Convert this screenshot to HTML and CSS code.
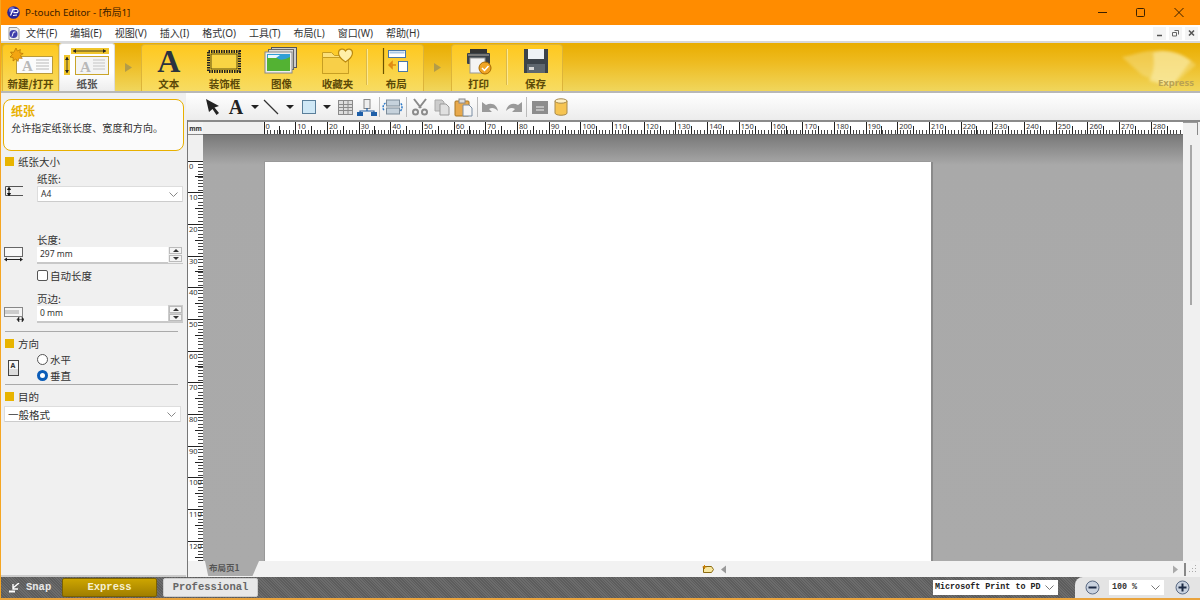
FILE: index.html
```html
<!DOCTYPE html>
<html lang="zh">
<head>
<meta charset="utf-8">
<title>P-touch Editor</title>
<link rel="stylesheet" href="styles.css">
</head>
<body>
<div class="window">
  <header class="titlebar">
    <svg class="appicon" width="13" height="13" viewBox="0 0 13 13"><circle cx="6.5" cy="6.5" r="6.3" fill="#26269a"/><circle cx="5" cy="4" r="3" fill="#6f6fd0"/><path d="M3.5 9.5 6 3.5h3.5a1.2 1.2 0 0 1 0 3.2H6.5M6 9.5l4-.5" stroke="#fff" stroke-width="1.2" fill="none"/></svg>
    <span class="title">P-touch Editor - [布局1]</span>
    <div class="wincontrols">
      <svg width="38" height="25" viewBox="0 0 38 25"><path d="M14 12.5h9" stroke="#3a2000" stroke-width="1"/></svg>
      <svg width="38" height="25" viewBox="0 0 38 25"><rect x="14.5" y="8.5" width="8" height="8" rx="1" fill="none" stroke="#3a2000" stroke-width="1"/></svg>
      <svg width="38" height="25" viewBox="0 0 38 25"><path d="M14.5 8l9 9M23.5 8l-9 9" stroke="#3a2000" stroke-width="1"/></svg>
    </div>
  </header>

  <nav class="menubar">
    <svg class="docicon" width="12" height="13" viewBox="0 0 12 13"><path d="M1 .5h8l2 2v10H1z" fill="#eee" stroke="#999"/><circle cx="5.5" cy="7" r="4" fill="#3d3dab"/><path d="M4 9.5 5.5 5h2" stroke="#fff" fill="none"/></svg>
    <span>文件(F)</span><span>编辑(E)</span><span>视图(V)</span><span>插入(I)</span><span>格式(O)</span><span>工具(T)</span><span>布局(L)</span><span>窗口(W)</span><span>帮助(H)</span>
    <div class="mdi">
      <button class="mdibtn"><svg width="13" height="12" viewBox="0 0 13 12"><path d="M4 8.5h5" stroke="#555" stroke-width="1.5"/></svg></button>
      <button class="mdibtn"><svg width="13" height="12" viewBox="0 0 13 12"><path d="M5.5 3.5h4v4M3.5 5.5h4v3.5h-4z" stroke="#666" fill="none"/></svg></button>
      <button class="mdibtn"><svg width="13" height="12" viewBox="0 0 13 12"><path d="M4 3.5l5 5M9 3.5l-5 5" stroke="#555" stroke-width="1.6"/></svg></button>
    </div>
  </nav>

  <section class="ribbon">
    <div class="rgroup rg-new">
      <div class="ritem wfull">
        <svg width="46" height="30" viewBox="0 0 46 30"><rect x="8.5" y="10.5" width="36" height="17" fill="#fbfbfb" stroke="#b99a3a"/><path d="M28 14h13M28 17h13M28 20h13M28 23h13" stroke="#cfcfcf" stroke-width="1.5"/><text x="14" y="25" class="ico-a">A</text><path d="M8 2l1.400 3 3-1.500-.5 3.300 3.300.8-2.700 2 1.800 2.800-3.400-.2-.9 3.300-2.300-2.500L5 15l.2-3.400L2 11l2.300-2.300L2.500 6l3.300.3z" fill="#f3a511" stroke="#a86a00" stroke-width=".6"/></svg>
        <span class="rlabel">新建/打开</span>
      </div>
    </div>
    <div class="rtab">
      <svg width="46" height="30" viewBox="0 0 46 30"><rect x="11.500" y="10.500" width="33" height="18" fill="#f4f4f4" stroke="#c9a429"/><path d="M29 14h12M29 17h12M29 20h12M29 23h12" stroke="#d4d4d4" stroke-width="1.5"/><text x="16" y="26" class="ico-a">A</text><rect x="7" y="2" width="38" height="6" fill="#f0c52c"/><path d="M9 5h33" stroke="#222" stroke-width=".8"/><path d="M9 5l3-2v4zM42 5l-3-2v4z" fill="#222"/><rect x="0" y="9" width="6" height="20" fill="#f0c52c"/><path d="M3 11v16" stroke="#222" stroke-width=".8"/><path d="M3 11l-2 3h4zM3 27l-2-3h4z" fill="#222"/></svg>
      <span class="rlabel">纸张</span>
    </div>
    <div class="rarrow"><svg width="8" height="9" viewBox="0 0 8 9"><path d="M1 0l7 4.500-7 4.500z" fill="#b39c48"/></svg></div>
    <div class="rgroup rg-main">
      <div class="ritem w54">
        <span class="bigA">A</span>
        <span class="rlabel">文本</span>
      </div>
      <div class="ritem w58">
        <svg width="36" height="30" viewBox="0 0 36 30"><rect x="2.500" y="5.500" width="31" height="20" fill="#f7cf3a" stroke="#222" stroke-width="3" stroke-dasharray="1.500 1"/><rect x="5" y="8" width="26" height="15" fill="#f9d544" stroke="#3a3000" stroke-width=".8"/></svg>
        <span class="rlabel">装饰框</span>
      </div>
      <div class="ritem w57">
        <svg width="34" height="30" viewBox="0 0 34 30"><rect x="7.500" y="1.500" width="25" height="20" fill="#ccc" stroke="#555"/><rect x="4.500" y="3.500" width="25" height="20" fill="#ddd" stroke="#666"/><rect x="1" y="6" width="27" height="21" fill="#eee" stroke="#888"/><rect x="3" y="8" width="23" height="17" fill="#2f9fd6"/><path d="M3 12q6-4 10 0t13-1v14H3z" fill="#53b233"/><path d="M4 9h12l-4 3H4z" fill="#e8f6ff"/></svg>
        <span class="rlabel">图像</span>
      </div>
      <div class="ritem w56">
        <svg width="34" height="30" viewBox="0 0 34 30"><path d="M1.500 6.500h9l3 3h14v18h-26z" fill="#fbe07a" stroke="#c79e22"/><path d="M1.500 11.500h26v16h-26z" fill="#f8cf48" stroke="#c79e22"/><path d="M24.500 16s-7-4.500-7-9c0-4.500 5.500-5 7-2 1.500-3 7-2.500 7 2 0 4.500-7 9-7 9z" fill="#fff0a8" stroke="#bb8a10" stroke-width="1.200"/></svg>
        <span class="rlabel">收藏夹</span>
      </div>
      <i class="rsep"></i>
      <div class="ritem w54">
        <svg width="28" height="30" viewBox="0 0 28 30"><path d="M1.500 2v26" stroke="#6a5200" stroke-width="1.200"/><rect x="6.500" y="4.500" width="17" height="7" fill="#fff" stroke="#4a78a8"/><rect x="7.500" y="5.500" width="15" height="2" fill="#a9c8e6"/><rect x="16.500" y="15.500" width="9" height="10" fill="#fff" stroke="#4a78a8"/><path d="M14 19H7M7 19l3-3v6z" stroke="#e08a10" stroke-width="1.500" fill="#fff2b0"/></svg>
        <span class="rlabel">布局</span>
      </div>
    </div>
    <div class="rarrow"><svg width="8" height="9" viewBox="0 0 8 9"><path d="M1 0l7 4.500-7 4.500z" fill="#b39c48"/></svg></div>
    <div class="rgroup rg-out">
      <div class="ritem w54">
        <svg width="28" height="30" viewBox="0 0 28 30"><path d="M5 3h17v5H5z" fill="#333"/><rect x="2" y="7" width="23" height="11" rx="1" fill="#3c4248"/><rect x="5" y="12" width="15" height="15" fill="#f4f4f4" stroke="#999"/><rect x="3" y="8" width="21" height="2" fill="#777"/><circle cx="20" cy="22" r="6" fill="#f0a526" stroke="#a86a00"/><path d="M17 22l2.500 2.500 4-4.500" stroke="#fff" stroke-width="1.500" fill="none"/></svg>
        <span class="rlabel">打印</span>
      </div>
      <i class="rsep"></i>
      <div class="ritem w54">
        <svg width="28" height="30" viewBox="0 0 28 30"><path d="M2 3h24v24H2z" fill="#3c434a"/><rect x="6" y="3" width="16" height="10" fill="#eef2f5"/><rect x="5" y="18" width="18" height="9" fill="#5e666e"/><rect x="7" y="21" width="5" height="3" fill="#d8d8d8"/></svg>
        <span class="rlabel">保存</span>
      </div>
    </div>
    <div class="watermark">
      <svg class="wm-shape" width="100" height="50" viewBox="0 0 100 50"><path d="M22 14c14-2 24-8 44-6 14 2 24 8 30 14L70 44 42 32z" fill="#f8e8a0" opacity=".4"/><path d="M53 10c2 12 0 22-4 28l22 6 20-26c-10-8-24-13-38-8z" fill="#fbeeb0" opacity=".55"/></svg>
      <span class="wm-text">Express</span>
    </div>
  </section>

  <main class="work">
    <aside class="panel">
      <div class="callout">
        <h2 class="callout-title">纸张</h2>
        <p class="callout-text">允许指定纸张长度、宽度和方向。</p>
      </div>
      <h3 class="sect s1"><i class="sq"></i>纸张大小</h3>
      <div class="field f-paper">
        <svg class="ficon" width="20" height="12" viewBox="0 0 20 12"><path d="M19 .5H1.500v9H19" fill="none" stroke="#555"/><path d="M5 1.500v8M3.500 3.500 5 1.500l1.500 2zM3.500 7.500 5 9.500l1.500-2z" stroke="#111" fill="#111"/></svg>
        <div class="fbody">
          <label class="flabel">纸张:</label>
          <div class="select"><span class="val-latin">A4</span><svg width="9" height="5" viewBox="0 0 9 5"><path d="M.5.500l4 4 4-4" stroke="#888" fill="none"/></svg></div>
        </div>
      </div>
      <div class="field f-len">
        <svg class="ficon" width="20" height="16" viewBox="0 0 20 16"><rect x=".5" y=".5" width="18" height="9" fill="#f8f8f8" stroke="#666"/><path d="M1 12.500h17" stroke="#222"/><path d="M0 12.500l3-2v4zM19 12.500l-3-2v4z" fill="#222"/></svg>
        <div class="fbody">
          <label class="flabel">长度:</label>
          <div class="spin"><span class="val-latin">297 mm</span><div class="spinbtns"><b class="up"></b><b class="down"></b></div></div>
        </div>
      </div>
      <label class="check"><i class="box"></i>自动长度</label>
      <div class="field f-margin">
        <svg class="ficon" width="20" height="16" viewBox="0 0 20 16"><rect x=".5" y=".5" width="18" height="9" fill="#f4f4f4" stroke="#888"/><path d="M1 3h14v4H1z" fill="#ccc"/><path d="M15 12.500h3M15 10v5l-2-2.500zM18 10v5l2-2.500z" fill="#222" stroke="#222" stroke-width=".5"/></svg>
        <div class="fbody">
          <label class="flabel">页边:</label>
          <div class="spin"><span class="val-latin">0 mm</span><div class="spinbtns framed"><b class="up"></b><b class="down"></b></div></div>
        </div>
      </div>
      <hr class="rule r1">
      <h3 class="sect"><i class="sq"></i>方向</h3>
      <div class="orient">
        <svg width="12" height="16" viewBox="0 0 12 16"><rect x=".5" y=".5" width="10" height="15" fill="#f6f6f6" stroke="#444"/><rect x="1" y="9" width="9" height="6" fill="#ddd"/><text x="2.500" y="8" class="ico-tiny">A</text></svg>
        <div class="radios">
          <label class="radio"><i class="dot"></i>水平</label>
          <label class="radio"><i class="dot on"></i>垂直</label>
        </div>
      </div>
      <hr class="rule r2">
      <h3 class="sect"><i class="sq"></i>目的</h3>
      <div class="select wide"><span>一般格式</span><svg width="9" height="5" viewBox="0 0 9 5"><path d="M.5.500l4 4 4-4" stroke="#888" fill="none"/></svg></div>
    </aside>

    <div class="docarea">
      <div class="toolbar">
        <svg width="22" height="20" viewBox="0 0 22 20"><path d="M4 2l13 7-4.500 1.500L17 16l-2.500 2-4-6L7 15z" fill="#222"/></svg>
        <svg width="24" height="20" viewBox="0 0 24 20"><text x="12" y="17" class="ico-toolA">A</text></svg>
        <svg width="14" height="20" viewBox="0 0 14 20"><path d="M3 8h8l-4 4z" fill="#222"/></svg>
        <svg width="18" height="20" viewBox="0 0 18 20"><path d="M2 3l14 14" stroke="#333" stroke-width="1.300"/></svg>
        <svg width="20" height="20" viewBox="0 0 20 20"><path d="M6 8h8l-4 4z" fill="#222"/></svg>
        <svg width="18" height="20" viewBox="0 0 18 20"><rect x="2.500" y="3.500" width="13" height="13" fill="#cfe8f6" stroke="#5a7f9a"/></svg>
        <svg width="18" height="20" viewBox="0 0 18 20"><path d="M5 8h8l-4 4z" fill="#222"/></svg>
        <svg width="18" height="20" viewBox="0 0 18 20"><rect x="2.500" y="3.500" width="14" height="14" fill="#ddd" stroke="#8a8a8a"/><path d="M2.500 7.500h14M2.500 10.500h14M2.500 13.500h14M7.500 3.500v14M12 3.500v14" stroke="#8a8a8a"/></svg>
        <svg width="24" height="20" viewBox="0 0 24 20"><rect x="10" y="2.500" width="6" height="9" fill="#eee" stroke="#888"/><path d="M13 11v3M6 17v-3h14v3" stroke="#1e5fa8" fill="none" stroke-width="1.200"/><rect x="3" y="15" width="6" height="4" fill="#1e5fa8"/><rect x="17" y="15" width="6" height="4" fill="#1e5fa8"/></svg>
        <i class="tsep"></i>
        <svg width="25" height="20" viewBox="-1.500 0 25 20"><rect x="5" y="3" width="13" height="6" fill="#c6d2dc" stroke="#7d8c99"/><rect x="5" y="11" width="13" height="6" fill="#c6d2dc" stroke="#7d8c99"/><path d="M4 6C1 8 1 12 3 14M19 14c2-2 2-6 0-8" stroke="#2a78c8" stroke-width="1.500" fill="none" stroke-dasharray="2 1"/></svg>
        <i class="tsep"></i>
        <svg width="26" height="20" viewBox="0 0 26 20"><path d="M7 2l7 9M19 2l-7 9" stroke="#8a8a8a" stroke-width="2"/><circle cx="8.500" cy="15" r="2.500" fill="none" stroke="#8a8a8a" stroke-width="2"/><circle cx="17.500" cy="15" r="2.500" fill="none" stroke="#8a8a8a" stroke-width="2"/></svg>
        <svg width="18" height="20" viewBox="0 0 18 20"><path d="M2 3h7l2 2v9H2z" fill="#ccc" stroke="#aaa"/><path d="M7 7h6l3 3v8H7z" fill="#e0e0e0" stroke="#999"/></svg>
        <svg width="25" height="20" viewBox="0 0 25 20"><rect x="4" y="4" width="14" height="15" rx="1" fill="#e8a94c" stroke="#a87622"/><rect x="8" y="2" width="6" height="4" fill="#ddd" stroke="#888"/><path d="M12 8h6l3 3v8h-9z" fill="#f4f4f4" stroke="#7a8ea5"/></svg>
        <i class="tsep"></i>
        <svg width="24" height="20" viewBox="0 0 24 20"><path d="M4 5v10h10l-3-3c3-2 6-1 9 2-1-6-6-9-12-6z" fill="#9a9a9a"/></svg>
        <svg width="23" height="20" viewBox="0 0 23 20"><path d="M20 5v10H10l3-3c-3-2-6-1-9 2 1-6 6-9 12-6z" fill="#9a9a9a"/></svg>
        <i class="tsep"></i>
        <svg width="26" height="20" viewBox="0 0 26 20"><rect x="5" y="4" width="16" height="13" fill="#8d8d8d"/><path d="M9 10h8M9 13h8" stroke="#eee"/></svg>
        <svg width="16" height="20" viewBox="0 0 16 20"><path d="M2 4v12c0 3 12 3 12 0V4z" fill="#f6c452" stroke="#a88a4a"/><ellipse cx="8" cy="4" rx="6" ry="2.200" fill="#fdf0c8" stroke="#a88a4a"/></svg>
      </div>

      <div class="doc">
        <div class="hrow">
          <div class="corner">mm</div>
          <div class="hruler">
            <span>0</span><span>10</span><span>20</span><span>30</span><span>40</span><span>50</span><span>60</span><span>70</span><span>80</span><span>90</span><span>100</span><span>110</span><span>120</span><span>130</span><span>140</span><span>150</span><span>160</span><span>170</span><span>180</span><span>190</span><span>200</span><span>210</span><span>220</span><span>230</span><span>240</span><span>250</span><span>260</span><span>270</span><span>280</span>
          </div>
          <div class="corner-r"></div>
        </div>
        <div class="mid">
          <div class="vruler">
            <span>0</span><span>10</span><span>20</span><span>30</span><span>40</span><span>50</span><span>60</span><span>70</span><span>80</span><span>90</span><span>100</span><span>110</span><span>120</span><span></span>
          </div>
          <div class="canvas"><div class="page"></div></div>
          <div class="vscroll"><i class="thumb"></i></div>
        </div>
        <div class="tabrow">
          <div class="sheet">布局页1</div>
          <svg class="tagicon" width="12" height="9" viewBox="0 0 12 9"><path d="M1.500 1.500h8l2 3-2 3h-8z" fill="#f7e7a0" stroke="#8a6a10"/><path d="M2.500 0v4M.5 2h4" stroke="#d08000"/></svg>
          <svg class="tabl" width="7" height="9" viewBox="0 0 7 9"><path d="M6 .5 1 4.500l5 4z" fill="#999"/></svg>
          <svg class="tabr" width="7" height="9" viewBox="0 0 7 9"><path d="M1 .5l5 4-5 4z" fill="#aaa"/></svg>
          <i class="tabend"></i>
          <svg class="grip" width="10" height="8" viewBox="0 0 10 8"><path d="M8 0h1v1H8zM5 3h1v1H5zM8 3h1v1H8zM2 6h1v1H2zM5 6h1v1H5zM8 6h1v1H8z" fill="#aaa"/></svg>
        </div>
      </div>
    </div>
  </main>

  <footer class="statusbar">
    <div class="snap">
      <svg width="11" height="10" viewBox="0 0 11 10"><path d="M10 0 4 5M4 1v5h5" stroke="#fff" stroke-width="1.400" fill="none"/><path d="M0 8.500h6" stroke="#fff" stroke-width="2"/></svg>
      <span>Snap</span>
    </div>
    <button class="mode active">Express</button>
    <button class="mode">Professional</button>
    <div class="printer"><span>Microsoft Print to PD</span><svg width="9" height="5" viewBox="0 0 9 5"><path d="M.5.500l4 4 4-4" stroke="#777" fill="none"/></svg></div>
    <div class="zoombox">
      <svg width="15" height="15" viewBox="0 0 15 15"><circle cx="7.500" cy="7.500" r="6.500" fill="#c9d2df" stroke="#5b6b84"/><path d="M3.500 7.500h8" stroke="#1c2a44" stroke-width="2"/></svg>
      <div class="zoomsel"><span>100 %</span><svg width="9" height="5" viewBox="0 0 9 5"><path d="M.5.500l4 4 4-4" stroke="#777" fill="none"/></svg></div>
      <svg width="15" height="15" viewBox="0 0 15 15"><circle cx="7.500" cy="7.500" r="6.500" fill="#c9d2df" stroke="#5b6b84"/><path d="M3.500 7.500h8M7.500 3.500v8" stroke="#1c2a44" stroke-width="2"/></svg>
    </div>
  </footer>
</div>
</body>
</html>
```
FILE: styles.css
```css
* { box-sizing: border-box; }
html, body { margin: 0; height: 100%; overflow: hidden; }
body { font-family: "Noto Sans CJK SC", "Noto Sans", sans-serif; color: #222; background: #f0f0f0; }
svg { display: block; flex: none; }
button { font: inherit; padding: 0; }
h2, h3, p { margin: 0; font-weight: 400; }
i { display: block; font-style: normal; }

.window { width: 1200px; height: 600px; display: flex; flex-direction: column; border-left: 1px solid #f5a623; border-bottom: 2px solid #e9a33c; overflow: hidden; }

/* title bar */
.titlebar { height: 25px; flex: none; display: flex; align-items: center; background: #ff8c00; padding-left: 7px; margin-left: -1px; }
.appicon { margin-right: 5px; }
.title { font: 9.800px/1 "Noto Sans", "Noto Sans CJK SC", sans-serif; color: #3a2000; }
.wincontrols { margin-left: auto; display: flex; padding-right: 2px; }

/* menu */
.menubar { height: 16px; flex: none; display: flex; align-items: center; gap: 13px; background: #fff; padding-left: 7px; font: 10px/16px "Noto Sans", "Noto Sans CJK SC", sans-serif; color: #333; }
.docicon { margin-right: -7px; }
.mdi { margin-left: auto; display: flex; gap: 3px; padding-right: 2px; }
.mdibtn { width: 13px; height: 13px; border: 0; background: #f4f4f4; }

/* ribbon */
.ribbon { height: 52px; flex: none; position: relative; display: flex; align-items: flex-end; padding: 0 0 0 1px; background: linear-gradient(#e9ad00 0, #eebb20 40%, #f0d65c 100%); border-top: 2px solid #d8d8d8; border-bottom: 2px solid #b8b8b8; }
.rgroup { height: 47px; display: flex; background: linear-gradient(#ffc81e, #f7dc62); border: 1px solid #dcb43a; border-bottom: 0; border-radius: 4px 4px 0 0; }
.rg-new { width: 57px; }
.rg-main { width: 283px; }
.rg-out { width: 112px; margin-left: 1px; }
.ritem { display: flex; flex-direction: column; align-items: center; justify-content: space-between; padding-top: 1px; }
.wfull { width: 100%; }
.w54 { width: 54px; }
.w56 { width: 56px; }
.w57 { width: 57px; }
.w58 { width: 58px; }
.rtab { width: 56px; height: 48px; display: flex; flex-direction: column; align-items: center; justify-content: space-between; padding-top: 2px; background: linear-gradient(#fff 60%, #ededed); border: 1px solid #ddd; border-bottom: 0; border-radius: 3px 3px 0 0; }
.rlabel { font: 700 10.500px/14px "Noto Sans CJK SC", sans-serif; color: #5c4a08; white-space: nowrap; }
.rtab .rlabel { color: #555; }
.rarrow { width: 26px; height: 46px; flex: none; display: flex; align-items: center; justify-content: center; padding-bottom: 2px; }
.rsep { width: 2px; height: 36px; margin: 4px 1px 0; background: #d9b94c; flex: none; border-right: 1px solid #fde88e; }
.ico-a { font: 700 15px "Liberation Serif", serif; fill: #b8b8b8; }
.bigA { height: 30px; font: 700 32px/30px "Liberation Serif", serif; color: #2b3340; }
.ico-tiny { font: 700 7px "Noto Sans", sans-serif; fill: #333; }
.ico-toolA { font: 700 20px "Liberation Serif", serif; fill: #222; text-anchor: middle; }
.watermark { position: absolute; right: 0; top: 0; width: 100px; height: 48px; }
.wm-shape { filter: blur(1.500px); }
.wm-text { position: absolute; right: 6px; bottom: 1px; font: 700 9.500px/14px "Noto Sans", sans-serif; color: #b9a253; }

/* main */
.work { flex: 1; min-height: 0; display: flex; }
.panel { width: 185px; flex: none; padding: 6px 2px 0 2px; border-bottom: 2px solid #ccc; background: #f0f0f0; font-size: 10.500px; color: #333; }
.callout { height: 52px; padding: 3px 7px; background: #fbfbfb; border: 1px solid #e8b000; border-radius: 8px; }
.callout-title { font: 700 12px/16px "Noto Sans CJK SC", sans-serif; color: #e8b000; }
.callout-text { font-size: 10px; line-height: 18px; letter-spacing: .15px; white-space: nowrap; color: #333; }
.sect { display: flex; align-items: center; gap: 4px; height: 16px; padding-bottom: 2px; margin-left: 2px; font-size: 10.500px; color: #333; }
.s1 { margin-top: 3px; }
.sq { width: 9px; height: 9px; background: #e8b400; }
.field { display: flex; }
.ficon { margin: 15px 13px 0 1px; }
.fbody { width: 146px; }
.f-paper { margin-top: 1px; height: 61px; }
.f-margin { margin-top: 8px; }
.f-margin .ficon { margin-top: 16px; }
.flabel { display: block; font-size: 10.500px; line-height: 15px; color: #333; }
.select { height: 16px; display: flex; align-items: center; justify-content: space-between; padding: 0 4px 0 3px; background: #fff; border: 1px solid #ddd; border-bottom-color: #ccc; border-radius: 1px; }
.val-latin { font: 8.500px/1 "Noto Sans", sans-serif; color: #333; }
.spin { height: 17px; display: flex; align-items: center; justify-content: space-between; padding-left: 3px; background: #fff; border-bottom: 2px solid #c8c8c8; }
.spinbtns { width: 15px; height: 17px; display: flex; flex-direction: column; gap: 1px; padding: 1px 1px; background: #f0f0f0; }
.spinbtns.framed { background: #ccc; }
.spinbtns b { flex: 1; display: flex; align-items: center; justify-content: center; background: #f4f4f4; border: 1px solid #bbb; }
.spinbtns b::before { content: ""; border: 3px solid transparent; }
.spinbtns .up::before { border-bottom-color: #333; border-top-width: 0; }
.spinbtns .down::before { border-top-color: #333; border-bottom-width: 0; }
.check { display: flex; align-items: center; gap: 2px; height: 14px; padding-bottom: 2px; margin: 5px 0 0 34px; }
.box { width: 11px; height: 11px; background: #fff; border: 1px solid #555; border-radius: 2px; }
.rule { margin: 0 6px 0 2px; border: 0; border-top: 1px solid #aaa; }
.r1 { margin-top: 8px; margin-bottom: 4px; }
.r2 { margin-top: 0; margin-bottom: 4px; }
.orient { display: flex; }
.orient svg { margin: 8px 17px 0 5px; }
.radios { display: flex; flex-direction: column; }
.radio { display: flex; align-items: center; gap: 2px; height: 16px; padding-bottom: 2px; }
.dot { width: 11px; height: 11px; border-radius: 50%; background: #fff; border: 1px solid #555; }
.dot.on { border: 3px solid #0a5cb8; }
.wide { width: 177px; margin: 1px 0 0 1px; font-size: 10.500px; color: #333; }

/* document area */
.docarea { flex: 1; min-width: 0; display: flex; flex-direction: column; }
.toolbar { height: 27px; flex: none; display: flex; align-items: center; padding-left: 16px; background: linear-gradient(#fff, #ececec); }
.tsep { width: 1px; height: 20px; margin: 0 .5px; background: #bbb; flex: none; }
.doc { flex: 1; min-height: 0; display: flex; flex-direction: column; margin-left: 1px; border-left: 1px solid #777; }
.hrow { height: 15px; flex: none; display: flex; border-top: 2px solid #8a8a8a; }
.corner { width: 15px; flex: none; font: 700 6.500px/13px "Noto Sans", sans-serif; text-align: center; color: #333; background: #f4f4f4; border-bottom: 1px solid #888; }
.hruler { flex: 1; min-width: 0; display: flex; padding-left: 60.500px; background: linear-gradient(#f0f0f0, #f0f0f0) 0 0 / 60.500px 100% no-repeat, #fff; border-bottom: 1px solid #666; overflow: hidden; }
.hruler span { width: 31.700px; flex: none; padding-left: 2px; font: 7.500px/8px "Noto Sans", sans-serif; color: #333;
  background:
    linear-gradient(#222, #222) 0 0 / 1px 100% no-repeat,
    linear-gradient(#222, #222) 15.850px 100% / 1px 8px no-repeat,
    repeating-linear-gradient(90deg, #444 0, #444 1px, transparent 1px, transparent 3.170px) 0 100% / 100% 4px no-repeat; }
.corner-r { width: 15px; flex: none; background: #f0f0f0; border-top: 1px solid #999; border-right: 1px solid #888; margin-right: 2px; }
.mid { flex: 1; min-height: 0; display: flex; }
.vruler { width: 15px; flex: none; display: flex; flex-direction: column; padding-top: 25.500px; background: linear-gradient(#f0f0f0, #f0f0f0) 0 0 / 100% 25.500px no-repeat, #fff; overflow: hidden; }
.vruler span { height: 31.700px; flex: none; padding: 1px 0 0 1px; font: 7.500px/8px "Noto Sans", sans-serif; color: #333;
  background:
    linear-gradient(#222, #222) 0 0 / 100% 1px no-repeat,
    linear-gradient(#222, #222) 100% 15.850px / 8px 1px no-repeat,
    repeating-linear-gradient(180deg, #444 0, #444 1px, transparent 1px, transparent 3.170px) 100% 0 / 5px 100% no-repeat; }
.canvas { width: 980px; flex: none; padding: 27px 0 0 62px; background: linear-gradient(#787878, #a9a9a9 30px, #aaa); overflow: hidden; }
.page { width: 666px; height: 420px; background: #fff; box-shadow: 1px 1px 0 1px #8a8a8a, -1px -1px 0 #999; }
.vscroll { flex: 1; display: flex; justify-content: center; padding-top: 10px; background: #f0f0f0; }
.thumb { width: 2px; height: 160px; background: #a8a8a8; margin-right: 2px; }
.tabrow { height: 16px; flex: none; display: flex; align-items: center; background: #f2f2f2; padding-right: 3px; }
.sheet { width: 54px; height: 15px; margin: -1px 0 0 17px; padding-left: 4px; font: 700 8.500px/13px "Noto Sans CJK SC", sans-serif; color: #555; background: #aaa; clip-path: polygon(0 0, 100% 0, 88% 100%, 6% 100%); white-space: nowrap; }
.tagicon { margin-left: 443px; }
.tabl { margin-left: 6px; }
.tabr { margin-left: 445px; }
.tabend { width: 2px; height: 13px; margin-left: 5px; background: #888; }
.grip { margin-left: auto; }

/* status bar */
.statusbar { height: 21px; flex: none; display: flex; align-items: center; padding-left: 8px; font: 700 10.500px/1 "Liberation Mono", monospace; background: repeating-linear-gradient(45deg, #5d5d5d 0, #5d5d5d 1px, #6c6c6c 1px, #6c6c6c 2px); }
.snap { width: 53px; display: flex; align-items: center; gap: 6px; color: #e8e8e8; }
.mode { width: 95px; height: 19px; margin-right: 6px; font: inherit; color: #666; background: #e8e8e8; border: 1px solid #ccc; border-radius: 2px; }
.mode.active { color: #f6f0d0; background: linear-gradient(#cda500, #a07e00); border-color: #7c6200; }
.printer { width: 125px; height: 15px; margin-left: 669px; display: flex; align-items: center; justify-content: space-between; padding: 0 4px 0 2px; background: #fff; font: 700 8.400px/1 "Liberation Mono", monospace; color: #222; white-space: nowrap; }
.zoombox { flex: 1; align-self: stretch; margin-left: 17px; display: flex; align-items: center; padding: 0 10px 0 10px; gap: 9px; background: #e4e4e4; border-radius: 8px 0 0 0; }
.zoomsel { width: 55px; height: 15px; margin-right: 2px; display: flex; align-items: center; justify-content: space-between; padding: 0 4px 0 3px; background: #fff; font: 700 8.400px/1 "Liberation Mono", monospace; color: #333; }
```
